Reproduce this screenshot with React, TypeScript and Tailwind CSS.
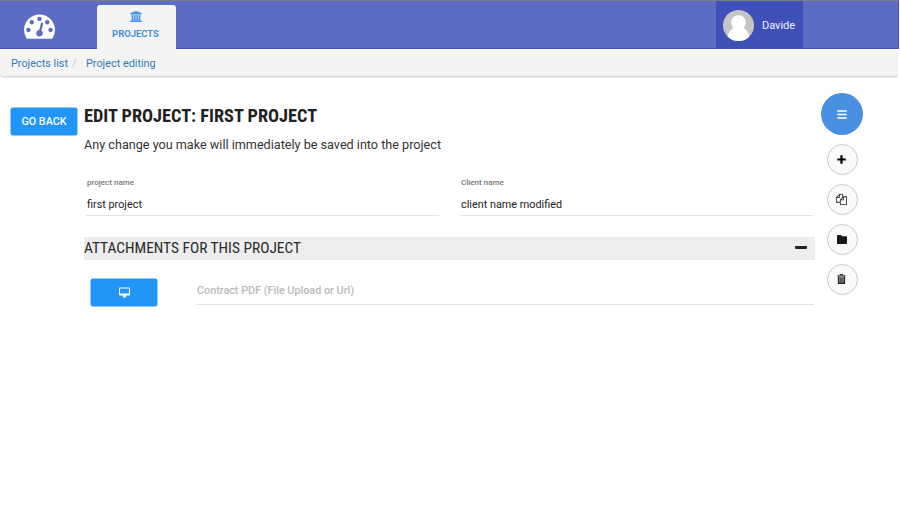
import type { ReactNode } from "react";

function GaugeIcon() {
  return (
    <svg viewBox="0 0 1792 1792" className="h-[31px] w-[31px] fill-white">
      <path d="M384 1152q0-53-37.5-90.5t-90.5-37.5-90.5 37.5-37.5 90.5 37.5 90.5 90.5 37.5 90.5-37.5 37.5-90.5zm192-448q0-53-37.5-90.5t-90.5-37.5-90.5 37.5-37.5 90.5 37.5 90.5 90.5 37.5 90.5-37.5 37.5-90.5zm428 481l101-382q6-26-7.5-48.5t-38.5-29.5-48 6.5-30 39.5l-101 382q-60 5-107 43.5t-63 98.5q-20 77 20 146t117 89 146-20 89-117q16-60-6-117t-72-91zm660-33q0-53-37.5-90.5t-90.5-37.5-90.5 37.5-37.5 90.5 37.5 90.5 90.5 37.5 90.5-37.5 37.5-90.5zm-640-640q0-53-37.5-90.5t-90.5-37.5-90.5 37.5-37.5 90.5 37.5 90.5 90.5 37.5 90.5-37.5 37.5-90.5zm448 192q0-53-37.5-90.5t-90.5-37.5-90.5 37.5-37.5 90.5 37.5 90.5 90.5 37.5 90.5-37.5 37.5-90.5zm320 448q0 261-141 483-19 29-54 29h-1402q-35 0-54-29-141-221-141-483 0-182 71-348t191-286 286-191 348-71 348 71 286 191 191 286 71 348z" />
    </svg>
  );
}

function BankIcon() {
  return (
    <svg viewBox="0 0 1920 1792" className="h-[11px] w-3 fill-[#3f8fe6]">
      <path d="M960 0l960 384v128h-128q0 26-20.5 45t-48.5 19h-1526q-28 0-48.5-19t-20.5-45h-128v-128zm-704 640h256v768h128v-768h256v768h128v-768h256v768h128v-768h256v768h59q28 0 48.5 19t20.5 45v64h-1664v-64q0-26 20.5-45t48.5-19h59v-768zm1595 960q28 0 48.5 19t20.5 45v128h-1920v-128q0-26 20.5-45t48.5-19h1782z" />
    </svg>
  );
}

function Avatar() {
  return (
    <svg viewBox="0 0 30 30" className="h-[31px] w-[31px]">
      <defs>
        <clipPath id="avatar"><circle cx="15" cy="15" r="15" /></clipPath>
      </defs>
      <g clipPath="url(#avatar)">
        <rect width="30" height="30" fill="#c5c5c5" />
        <path d="M15 5c4.200 0 7 3 7 7 0 2.600-1 4.400-2.400 5.700 3.400 1.300 6.200 5 6.400 12.300h-22c.2-7.300 3-11 6.400-12.300-1.400-1.300-2.400-3.100-2.400-5.700 0-4 2.800-7 7-7z" fill="#fff" />
      </g>
    </svg>
  );
}

function Action({ children }: { children: ReactNode }) {
  return (
    <button className="flex h-[31px] w-[31px] items-center justify-center rounded-full border border-[#c9c9c9] bg-[#fafafa] pr-px">
      {children}
    </button>
  );
}

function Field({ label, value }: { label: string; value: string }) {
  return (
    <div className="h-[41px] w-[353px] border-b border-[#e3e3e3] pl-px">
      <div className="h-4 text-[8.030px] leading-[16px] font-medium text-[#777]">{label}</div>
      <div className="pt-[6px] text-[10.850px] leading-[15px] text-[#222]">{value}</div>
    </div>
  );
}

export default function App() {
  return (
    <div className="h-[508px] w-[900px] overflow-hidden bg-white font-[Roboto,sans-serif] text-[#222]">
      <header className="flex h-[49px] w-[899px] border-t border-r border-b border-t-[#7d7d87] border-r-[#4656b8] border-b-[#4050b8] bg-[#5c6bc4]">
        <div className="w-[97px] pt-[9px] pl-6"><GaugeIcon /></div>
        <div className="mt-1 -mb-px flex h-[46px] w-[79px] flex-col items-center rounded-t-[3px] bg-[#f4f4f4] pt-[6px] pr-[2px]">
          <BankIcon />
          <span className="mt-[5px] text-[9.450px] leading-[14px] font-bold text-[#468fe0]">PROJECTS</span>
        </div>
        <div className="ml-[540px] flex w-[87px] items-center bg-[#3f50b8] pt-px pl-[7px] text-[11px] text-[#edf0ff]">
          <Avatar />
          <span className="ml-2 pt-[2px]">Davide</span>
        </div>
      </header>
      <nav className="mt-px flex h-[27px] w-[898px] items-center rounded-b-[3px] border-b border-[#d5d5d5] bg-[#f4f4f4] pt-[2px] pl-[11px] text-[10.870px] text-[#337ab7] shadow-[0_1px_0_#ececec]">
        <span className="w-[61px]">Projects list</span>
        <span className="w-[14px] text-[#c5c5c5]">/</span>
        <span>Project editing</span>
      </nav>
      <main className="flex">
        <div className="w-[84px] pt-[31px] pl-[11px]">
          <button className="block h-[27px] w-[66px] rounded-[2px] bg-[#2196f8] pt-[2px] text-[10.750px] font-medium whitespace-nowrap text-white shadow-[0_0_0_0.500px_#2196f8]">
            GO BACK
          </button>
        </div>
        <div className="w-[731px] pt-[27px]">
          <h1 className="font-['Roboto_Condensed',sans-serif] text-[18.300px] leading-[24px] font-bold whitespace-nowrap">
            EDIT PROJECT: FIRST PROJECT
          </h1>
          <p className="pt-[8px] text-[12.640px] leading-[18px] text-[#333]">
            Any change you make will immediately be saved into the project
          </p>
          <div className="mt-[21px] flex gap-[21px] pl-[2px]">
            <Field label="project name" value="first project" />
            <Field label="Client name" value="client name modified" />
          </div>
          <h2 className="mt-[21px] flex h-[23px] items-center justify-between bg-[#ededed] pr-2 font-['Roboto_Condensed',sans-serif] text-[15.400px] leading-[23px] text-[#2b2b2b]">
            <span>ATTACHMENTS FOR THIS PROJECT</span>
            <span className="mb-[3px] h-[3px] w-3 rounded-[1px] bg-[#222]" />
          </h2>
          <div className="mt-[19px] flex pl-[7px]">
            <button className="flex h-[27px] w-[66px] items-center justify-center rounded-[2px] bg-[#2196f8] shadow-[0_0_0_0.500px_#2196f8]">
              <svg viewBox="0 0 24 22" className="h-[11px] w-[13px] fill-white">
                <path d="M21 1H3C1.900 1 1 1.900 1 3v12c0 1.100.9 2 2 2h6v2l-1.500 2h9L15 19v-2h6c1.100 0 2-.9 2-2V3c0-1.100-.9-2-2-2zm0 12H3V3h18v10z" />
              </svg>
            </button>
            <div className="ml-[39px] h-[26px] w-[618px] border-b border-[#e3e3e3] pl-px text-[10.800px] leading-[24px] font-medium text-[#bababa]">
              Contract PDF (File Upload or Url)
            </div>
          </div>
        </div>
        <aside className="flex flex-col items-center gap-[9px] pt-[16px] pl-[6px]">
          <button className="mb-[-0.500px] flex h-[42px] w-[42px] flex-col items-center justify-center rounded-full bg-[#4a90e2]">
            <svg viewBox="0 0 10 9" className="h-[9px] w-[10px]"><path d="M.3 1h9.400M.3 4.500h9.400M.3 8h9.400" stroke="#fff" strokeWidth="1.500" /></svg>
          </button>
          <Action>
            <svg viewBox="0 0 9 9" className="h-[9px] w-[9px]"><path d="M4.500 .3v8.400M.3 4.500h8.400" stroke="#000" strokeWidth="2.200" /></svg>
          </Action>
          <Action>
            <svg viewBox="0 0 1792 1792" className="h-[11px] w-[11px] fill-[#222]">
              <path d="M1696 384q40 0 68 28t28 68v1216q0 40-28 68t-68 28h-960q-40 0-68-28t-28-68v-288h-544q-40 0-68-28t-28-68v-672q0-40 20-88t48-76l408-408q28-28 76-48t88-20h416q40 0 68 28t28 68v328q68-40 128-40h416zm-544 213l-299 299h299v-299zm-640-384l-299 299h299v-299zm196 647l316-316v-416h-384v416q0 40-28 68t-68 28h-416v640h512v-256q0-40 20-88t48-76zm956 804v-1152h-384v416q0 40-28 68t-68 28h-416v640h896z" />
            </svg>
          </Action>
          <Action>
            <svg viewBox="0 0 20 16" className="h-[9px] w-[10px] fill-[#181818]" preserveAspectRatio="none"><path d="M8 0H2C.9 0 0 .9 0 2v12c0 1.100.9 2 2 2h16c1.100 0 2-.9 2-2V4c0-1.100-.9-2-2-2h-8z" /></svg>
          </Action>
          <Action>
            <svg viewBox="0 0 9 10" className="h-[10px] w-[9px]" fill="none" stroke="#1c1c1c">
              <path d="M3 1.500V.5h3v1" strokeWidth=".9" />
              <path d="M.5 2h8" strokeWidth="1.200" />
              <path d="M1.500 2.500v6.800h6V2.500" strokeWidth="1.200" fill="#999" />
              <path d="M3.300 3.500v5M4.500 3.500v5M5.700 3.500v5" strokeWidth=".6" />
            </svg>
          </Action>
        </aside>
      </main>
    </div>
  );
}
